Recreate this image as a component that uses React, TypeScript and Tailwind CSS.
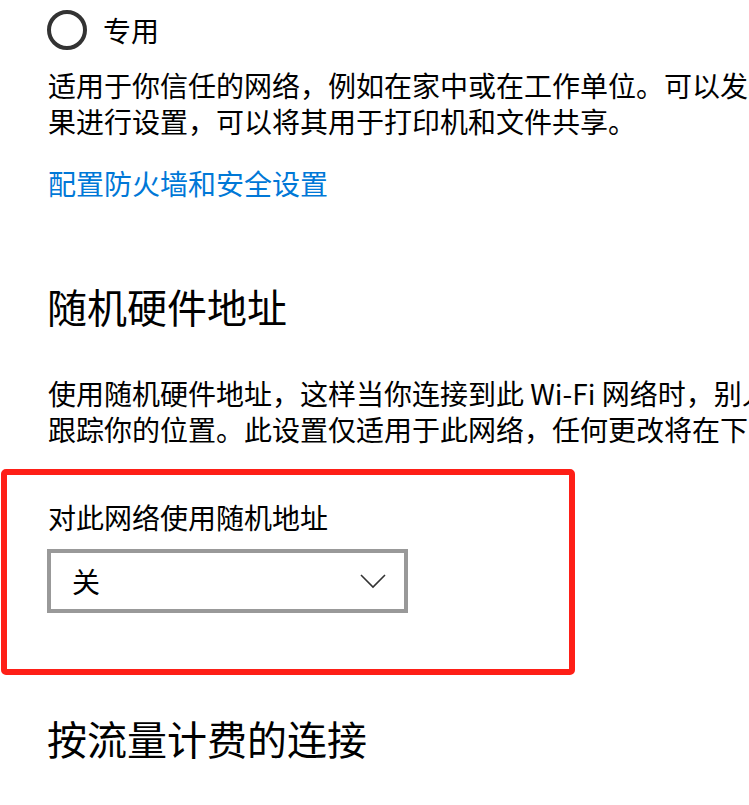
export default function App() {
  const font = {
    fontFamily: '"Noto Sans CJK SC", "Noto Sans", sans-serif',
  };

  return (
    <div
      className="w-[749px] h-[805px] overflow-hidden bg-white text-black"
      style={font}>
      {/* 网络类型：专用 */}
      <div className="ml-[47px] mt-[10px] flex items-center h-[40px]">
        <div className="w-[40px] h-[40px] rounded-full border-[4px] border-[#333333]" />
        <span className="ml-[16px] text-[28px] leading-[40px]">专用</span>
      </div>

      <div className="ml-[48px] mt-[17px] text-[28px] leading-[36px] whitespace-nowrap">
        <div>适用于你信任的网络，例如在家中或在工作单位。可以发现你的电脑，如</div>
        <div>果进行设置，可以将其用于打印机和文件共享。</div>
      </div>

      <div className="ml-[48px] mt-[26px] text-[28px] leading-[36px] text-[#0078d7] whitespace-nowrap">
        配置防火墙和安全设置
      </div>

      {/* 随机硬件地址 */}
      <h2 className="ml-[47px] mt-[79px] text-[40px] leading-[52px] font-normal whitespace-nowrap">
        随机硬件地址
      </h2>

      <div className="ml-[48px] mt-[43px] text-[28px] leading-[36px] whitespace-nowrap">
        <div>使用随机硬件地址，这样当你连接到此 Wi-Fi 网络时，别人更难</div>
        <div>跟踪你的位置。此设置仅适用于此网络，任何更改将在下次连接到此网络时生效。</div>
      </div>

      <div className="ml-[1px] mt-[22px] w-[574px] border-[6px] border-[#fe1f17] rounded-[5px] pl-[40px] pt-[24px] pb-[56px]">
        <div className="ml-[1px] text-[28px] leading-[36px] whitespace-nowrap">
          对此网络使用随机地址
        </div>
        <div className="mt-[14px] w-[361px] h-[64px] border-[4px] border-[#999999] flex items-center justify-between pl-[21px] pr-[18px]">
          <span className="text-[28px] leading-[36px]">关</span>
          <svg width="26" height="16" viewBox="0 0 26 16" fill="none">
            <polyline
              points="1,2 13,14 25,2"
              stroke="#333333"
              strokeWidth="1.6"
            />
          </svg>
        </div>
      </div>

      {/* 按流量计费的连接 */}
      <h2 className="ml-[47px] mt-[37px] text-[40px] leading-[52px] font-normal whitespace-nowrap">
        按流量计费的连接
      </h2>
    </div>
  );
}
